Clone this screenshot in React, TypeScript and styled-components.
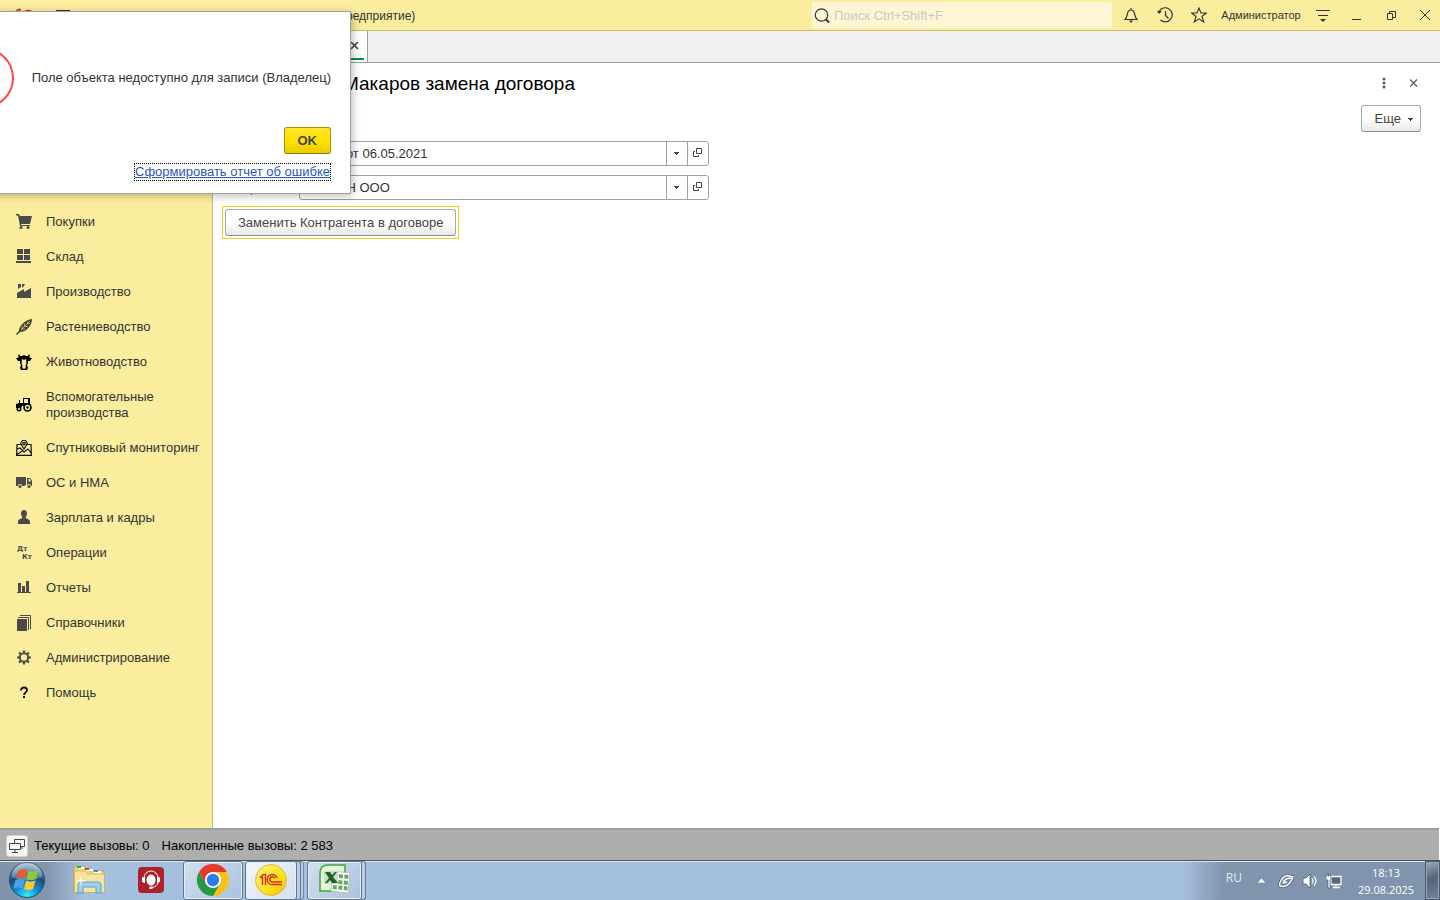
import React from "react";
import styled, { createGlobalStyle } from "styled-components";

const GlobalStyle = createGlobalStyle`
  * { box-sizing: border-box; }
  body {
    margin: 0;
    background: #fff;
    color: #333;
    font: 13px/16px "Liberation Sans", Arial, sans-serif;
  }
  button, input { font: inherit; color: inherit; }
  button { padding: 0; border: 0; background: none; cursor: pointer; }
  svg { display: block; flex: none; }
`;

const Page = styled.div`
  position: relative;
  display: flex;
  flex-direction: column;
  min-height: 100vh;
  overflow: hidden;
`;

/* ---------- title bar ---------- */
const TitleBar = styled.header`
  display: flex;
  align-items: center;
  gap: 14px;
  height: 31px;
  padding: 0 5px 0 14px;
  background: #fbed9e;
  border-bottom: 1px solid #c9bd72;
`;
const AppTitle = styled.span`
  flex: 1;
  margin-left: 5px;
  padding-top: 2px;
  font-size: 12px;
  white-space: nowrap;
`;
const IconButton = styled.button<{ $size?: number }>`
  display: flex;
  align-items: center;
  justify-content: center;
  width: ${(p) => p.$size ?? 20}px;
  height: ${(p) => p.$size ?? 20}px;
`;
const Search = styled.label`
  display: flex;
  align-items: center;
  gap: 3px;
  width: 300px;
  height: 26px;
  margin-right: -5px;
  padding-left: 2px;
  border-radius: 3px;
  background: #fdf6d4;
`;
const SearchInput = styled.input`
  flex: 1;
  min-width: 0;
  padding: 2px 0 0;
  border: 0;
  outline: 0;
  background: transparent;
  &::placeholder { color: #cbc9c0; opacity: 1; }
`;
const User = styled.button`
  min-width: 82px;
  margin: 0 -3px;
  font-size: 11px;
`;

/* ---------- tabs ---------- */
const TabBar = styled.nav`
  display: flex;
  height: 32px;
  padding-left: 213px;
  background: #f0f0f0;
  border-bottom: 1px solid #a0a0a0;
`;
const Tab = styled.div`
  display: flex;
  align-items: center;
  justify-content: flex-end;
  width: 155px;
  padding: 0 8px 0 3px;
  background: linear-gradient(#009646, #009646) 3px 27px / 148px 2px no-repeat #fff;
  border-right: 1px solid #a0a0a0;
`;

/* ---------- body ---------- */
const Body = styled.div`
  display: flex;
  flex: 1;
`;
const Sidebar = styled.nav`
  width: 213px;
  padding-top: 141px;
  background: #fbed9e;
  border-right: 1px solid #c9bd72;
`;
const Section = styled.a`
  display: flex;
  align-items: center;
  gap: 14px;
  padding: 10px 12px 9px 16px;
  color: #333;
  text-decoration: none;
`;
const Main = styled.main`
  flex: 1;
  padding: 0 19px 0 9px;
`;
const FormHeader = styled.div`
  display: flex;
  align-items: center;
  height: 42px;
`;
const Heading = styled.h1`
  flex: 1;
  margin: 0;
  padding-left: 121px;
  color: #000;
  font-size: 19px;
  line-height: 22px;
  font-weight: 400;
`;
const HeaderTools = styled.div`
  display: flex;
  gap: 14px;
  margin: 0 -1px 2px 0;
`;
const Toolbar = styled.div`
  display: flex;
  justify-content: flex-end;
  margin-bottom: 9px;
`;
const PushButton = styled.button<{ $accent?: boolean }>`
  display: flex;
  align-items: center;
  justify-content: center;
  gap: 7px;
  height: 27px;
  padding: 0 ${(p) => (p.$accent ? 13 : 12)}px;
  border: 1px solid ${(p) => (p.$accent ? "#a89600" : "#a9a9a9")};
  border-bottom-color: ${(p) => (p.$accent ? "#8c7d00" : "#8f8f8f")};
  border-radius: 3px;
  background: ${(p) =>
    p.$accent
      ? "linear-gradient(#ffe62e, #ffe100 50%, #eccb00)"
      : "linear-gradient(#fff, #fff 50%, #e8e8e8)"};
  color: #444;
  font-weight: ${(p) => (p.$accent ? 700 : 400)};
`;
const MoreButton = styled(PushButton)`
  padding: 0 6px 0 13px;
`;
const Field = styled.div`
  display: flex;
  align-items: center;
  margin-bottom: 9px;
`;
const FieldLabel = styled.label`
  width: 77px;
  color: #2b62b5;
`;
const FieldBox = styled.div`
  display: flex;
  width: 410px;
  height: 25px;
  border: 1px solid #a0a0a0;
  border-radius: 3px;
`;
const FieldInput = styled.input`
  flex: 1;
  min-width: 0;
  padding: 0 4px;
  border: 0;
  outline: 0;
  background: transparent;
`;
const FieldButton = styled.button`
  display: flex;
  align-items: center;
  justify-content: center;
  width: 21px;
  padding-bottom: 2px;
  border-left: 1px solid #a0a0a0;
`;
const FocusFrame = styled.div`
  display: inline-flex;
  margin-top: -3px;
  padding: 2px;
  border: 1px solid #f5cb14;
`;

/* ---------- error dialog ---------- */
const Dialog = styled.section`
  position: absolute;
  top: 11px;
  left: -66px;
  display: flex;
  flex-direction: column;
  width: 417px;
  padding: 36px 19px 12px;
  background: #fff;
  border: 1px solid #a0a0a0;
  box-shadow: 2px 2px 8px rgba(0, 0, 0, 0.25);
`;
const Message = styled.div`
  display: flex;
  align-items: center;
  justify-content: space-between;
  margin-bottom: 19px;
`;
const MessageText = styled.p`
  margin: 0;
  white-space: nowrap;
`;
const DialogActions = styled.div`
  display: flex;
  flex-direction: column;
  align-items: flex-end;
  gap: 9px;
`;
const ReportLink = styled.a`
  color: #1f57b8;
  border: 1px dotted #000;
`;

/* ---------- status bar ---------- */
const StatusBar = styled.footer`
  display: flex;
  align-items: center;
  gap: 12px;
  height: 32px;
  margin-right: 1px;
  padding: 2px 6px 0;
  background: #aeaeae;
  border-top: 2px solid #9e9e9e;
  color: #000;
`;
const StatusButton = styled(IconButton)`
  margin: 0 -6px 1px 0;
  border: 1px solid #d0d0d0;
  border-radius: 3px;
  background: #f7f7f7;
`;

/* ---------- taskbar ---------- */
const Taskbar = styled.footer`
  display: flex;
  align-items: center;
  height: 40px;
  border-top: 1px solid #49545f;
  box-shadow: inset 0 1px #dbe7f3;
  background: linear-gradient(90deg, #8193aa 0, #8496ae 48px, #a5c0de 84px, #a5c0de calc(100% - 258px), #8094ad calc(100% - 216px), #8094ad 100%);
`;
const Launchers = styled.div`
  display: flex;
  margin-right: 5px;
`;
const Launcher = styled.button<{ $width: number }>`
  display: flex;
  align-items: center;
  justify-content: center;
  width: ${(p) => p.$width}px;
  height: 39px;
  padding-bottom: 1px;
`;
const TaskButton = styled.button<{ $width: number; $stack?: number; $active?: boolean }>`
  display: flex;
  align-items: center;
  justify-content: center;
  width: ${(p) => p.$width}px;
  height: 39px;
  margin-right: ${(p) => 2 + (p.$stack ?? 0) * 4}px;
  padding-bottom: 2px;
  border: 1px solid #5f7791;
  border-radius: 3px;
  background: ${(p) =>
    p.$active ? "linear-gradient(135deg, #f2f6fa, #d3dfee)" : "linear-gradient(135deg, #d3dfed, #a9c2df)"};
  box-shadow: inset 0 0 0 1px #e6eef7
    ${(p) => (p.$stack ? ", 4px 0 0 -1px #b9cde4, 4px 0 0 0 #5f7791" : "")}
    ${(p) => (p.$stack && p.$stack > 1 ? ", 7px 0 0 -1px #b9cde4, 7px 0 0 0 #6f87a1" : "")};
`;
const Tray = styled.div`
  display: flex;
  align-items: center;
  height: 39px;
  margin-left: auto;
  color: #fff;
  font: 11px/17px "Open Sans", "Noto Sans", sans-serif;
`;
const Language = styled.span`
  margin: 0 11px 6px 0;
  color: #e3e8ee;
  font-size: 12px;
`;
const TrayIcons = styled.div`
  display: flex;
  align-items: center;
  gap: 8px;
  margin-right: 5px;
`;
const Clock = styled.time`
  width: 78px;
  text-align: center;
`;
const ShowDesktop = styled.button`
  width: 15px;
  height: 39px;
  border: 1px solid #4c5c70;
  background: linear-gradient(160deg, #9aa8ba, #54657a 45%, #71839a);
  box-shadow: inset 0 0 0 1px #93a3b7;
`;

const Glyph = ({ children, w = 16, h = 16 }: { children: React.ReactNode; w?: number; h?: number }) => (
  <svg width={w} height={h} viewBox={`0 0 ${w} ${h}`} fill="none" aria-hidden="true">
    {children}
  </svg>
);

const G = "#4a4a4a";

const sections: { name: string; icon: React.ReactNode }[] = [
  {
    name: "Покупки",
    icon: (
      <g fill={G}>
        <path d="M0 0h3l1 2h12l-2 8H5v1h9v1H4L2 1.500H0z" />
        <circle cx="5" cy="13.500" r="1.500" />
        <circle cx="12" cy="13.500" r="1.500" />
      </g>
    ),
  },
  { name: "Склад", icon: <path fill={G} d="M1 0h6v5H1zM8 0h6v5H8zM1 6h6v5H1zM8 6h6v5H8zM0 12h15v2H0z" /> },
  {
    name: "Производство",
    icon: <path fill={G} d="M1 14V9l7-4v3l7-4v10zM2 0h3v3L2 5zM6 0h3L8 2 6 4z" />,
  },
  {
    name: "Растениеводство",
    icon: (
      <>
        <path d="M.5 15.500L4 12" stroke="#2e2a1c" strokeWidth="1.300" />
        <path d="M3.500 12.500C3 8 7.500 2 15.500.5 15 8 9 13 3.500 12.500z" fill="#4d4834" stroke="#2e2a1c" strokeWidth=".8" />
        <path d="M5 11L14 2M6 7v3h3M8.500 4.500v3h3.500M11.500 2.500v2H14" stroke="#d9cc88" strokeWidth=".7" />
      </>
    ),
  },
  {
    name: "Животноводство",
    icon: (
      <>
        <path
          fill="#000"
          d="M3 0l1 2h2l2-1 2 1h2l1-2 1 2-1 1.500 3 .5-2 3h-2v2l-1 2 1 3-1 2H5l-1-2 1-3-1-2V7H2L0 4l3-.5L2 2z"
        />
        <path fill="#fbed9e" d="M6 5l2 1 2-1 .5 4-1 3 .5 2.500H6l.5-2.500-1-3z" />
      </>
    ),
  },
  {
    name: "Вспомогательные производства",
    icon: (
      <>
        <path fill="#000" d="M3 3h1v3h3V1h7v5l1 3H6l-1 2H0V7l3-1zM8 2v4h4V2z" fillRule="evenodd" />
        <circle cx="11.500" cy="10.500" r="3.500" fill="#fbed9e" stroke="#000" strokeWidth="1.600" />
        <circle cx="11.500" cy="10.500" r="1.200" fill="#000" />
        <circle cx="3" cy="12" r="1.800" fill="#fbed9e" stroke="#000" strokeWidth="1.400" />
      </>
    ),
  },
  {
    name: "Спутниковый мониторинг",
    icon: (
      <g stroke="#111" strokeWidth="1.200">
        <path d="M5 4.500H1L.6 15.400h14.800L15 4.500h-4M1 9l3-1 4 4 4-3 3 4M1 14.500l6-4" />
        <path d="M8 9L5.500 5a3 3 0 1 1 5 0z" fill="#fbed9e" />
        <circle cx="8" cy="3.500" r="1.200" />
      </g>
    ),
  },
  {
    name: "ОС и НМА",
    icon: (
      <>
        <path fill={G} d="M0 2h10v8l-2 1H6a2 2 0 0 0-4 0H0zM11 3h3l2 3v5h-1a2 2 0 0 0-4 0z" />
        <path fill="#fbed9e" d="M12.500 4h1.200L15 6.500h-2.500z" />
        <circle cx="4" cy="11.500" r="1.500" fill={G} />
        <circle cx="13" cy="11.500" r="1.500" fill={G} />
      </>
    ),
  },
  {
    name: "Зарплата и кадры",
    icon: <path fill={G} d="M8 0c2 0 3 1.300 3 3.200S9.800 7 9.600 7.500C10 9 14 8.500 14 12v2H2v-2c0-3.500 4-3 4.400-4.500C6.200 7 5 5.100 5 3.200S6 0 8 0z" />,
  },
  {
    name: "Операции",
    icon: (
      <g fill={G} fontFamily="DejaVu Sans, sans-serif" fontWeight="700" fontSize="7">
        <text x="1" y="6">Дт</text>
        <text x="6" y="14">Кт</text>
      </g>
    ),
  },
  { name: "Отчеты", icon: <path fill={G} d="M1 12h14v1H1zM2 3h3v9H2zM6 6h3v6H6zM10 1h3v11h-3z" /> },
  {
    name: "Справочники",
    icon: (
      <>
        <path fill={G} d="M1 4h10v12H1z" />
        <path stroke={G} d="M2 2.500h10.500V15M4 .5h10.500V14" />
      </>
    ),
  },
  {
    name: "Администрирование",
    icon: (
      <>
        <circle cx="8" cy="7.500" r="4.200" stroke={G} strokeWidth="2" />
        <path stroke={G} strokeWidth="2" d="M8 .5v3M8 11.500v3M1 7.500h3M12 7.500h3M3 2.500l2 2M11 10.500l2 2M13 2.500l-2 2M5 10.500l-2 2" />
      </>
    ),
  },
  {
    name: "Помощь",
    icon: (
      <>
        <path stroke="#111" strokeWidth="1.800" d="M5 5.500c0-2 1.200-3 3-3s3 1 3 2.700C11 7.500 8 7.500 8 10" />
        <path fill="#111" d="M7 11h2v2H7z" />
      </>
    ),
  },
];

const Caret = () => (
  <Glyph w={6} h={4}>
    <path fill="#444" d="M0 1h5v1H4v1H3v1H2V3H1V2H0z" />
  </Glyph>
);

const OpenIcon = () => (
  <Glyph w={10} h={10}>
    <path stroke="#444" d="M3.500 .5h5v5h-5zM2 3.500H.5v5h5V7" />
  </Glyph>
);

const PickField = ({ id, label, value }: { id: string; label: string; value: string }) => (
  <Field>
    <FieldLabel htmlFor={id}>{label}</FieldLabel>
    <FieldBox>
      <FieldInput id={id} defaultValue={value} />
      <FieldButton aria-label="Выбрать">
        <Caret />
      </FieldButton>
      <FieldButton aria-label="Открыть">
        <OpenIcon />
      </FieldButton>
    </FieldBox>
  </Field>
);

const OneC = ({ color, w, h }: { color: string; w: number; h: number }) => (
  <svg width={w} height={h} viewBox={`0 0 ${w} ${h}`} fill="none" stroke={color} aria-hidden="true">
    <path strokeWidth="1.500" d="M1 4.500L4 1.500h2V14M1 4h2.500v10" />
    <path strokeWidth="1.500" d="M19 5A5.500 5.500 0 1 0 14 13.500h9M17 6A3 3 0 1 0 14 11h9" />
  </svg>
);

const StartIcon = () => (
  <svg width="38" height="38" viewBox="0 0 38 38" aria-hidden="true">
    <defs>
      <radialGradient id="orb" cx="50%" cy="95%" r="90%">
        <stop offset="0" stopColor="#2ff0ff" />
        <stop offset=".35" stopColor="#1490d0" />
        <stop offset=".7" stopColor="#1d4a78" />
        <stop offset="1" stopColor="#8fb2cc" />
      </radialGradient>
    </defs>
    <circle cx="19" cy="19" r="17.500" fill="url(#orb)" stroke="#24496b" />
    <path d="M4 16a15 15 0 0 1 30 0c-9 4-21 4-30 0z" fill="#fff" opacity=".28" />
    <path fill="#f0592a" d="M11 9.500c3-2 5-2 8-.5l-2 8.500c-3-1.500-6-1.500-9 0z" />
    <path fill="#8fc63d" d="M20.500 9.500c3 1.500 6 1.500 10-.5l-2.500 9c-3 1.500-6 1.500-9.500 0z" />
    <path fill="#4aa3e8" d="M7.500 19c3-1.500 6-1.500 9 0l-2 8.500c-3-1.500-6-1.500-9 0z" />
    <path fill="#fdc82f" d="M18 19.500c3 1.500 6 1.500 9.500 0l-2.500 8.500c-3 1.500-6 1.500-9 0z" />
  </svg>
);

const FolderIcon = () => (
  <svg width="32" height="30" viewBox="0 0 32 30" aria-hidden="true">
    <path fill="#e9cf7a" stroke="#c3a548" d="M1 3l2-2h8l2 3h6l2 2h10v21H1z" />
    <path fill="#f7e3a0" d="M2 7h10l2 3h17v17H2z" />
    <path fill="#fff" d="M5 2h6v2H5zM13 4h7v2h-7zM21 6h7v2h-7z" />
    <path fill="#1fae3a" d="M4 1h4v2H4z" />
    <path fill="#d8402c" d="M12 3h4v2h-4z" />
    <path fill="#2e8ee0" d="M21 5h4v2h-4z" />
    <path fill="#9cd0ea" stroke="#5aa2c8" d="M5 28V19l2-2h19l2 2v9h-5v-6H10v6z" />
    <path stroke="#fff" d="M8 12v8M4 16h8" />
  </svg>
);

const HeadsetIcon = () => (
  <svg width="26" height="26" viewBox="0 0 26 26" aria-hidden="true">
    <rect width="26" height="26" rx="4" fill="#ad2228" />
    <ellipse cx="13" cy="13" rx="4.500" ry="5.500" fill="#fff" />
    <path d="M6 11a7 7 0 0 1 14 0M20 15c0 3-3 5-6 5.500" fill="none" stroke="#fff" />
    <path fill="#fff" d="M4 10.500l3-.5v6H6l-2-1.500zM22 10.500l-3-.5v6h1l2-1.500zM11.500 19.500h3v2.500h-3z" />
  </svg>
);

const ChromeIcon = () => (
  <svg width="32" height="32" viewBox="0 0 32 32" aria-hidden="true">
    <circle cx="16" cy="16" r="16" fill="#fbc117" />
    <path fill="#249a48" d="M2.140 8A16 16 0 0 0 16 32l6.930-12L16 24l-6.900-4z" />
    <path fill="#e33b2e" d="M16 8h13.860A16 16 0 0 0 2.140 8l6.930 12z" />
    <circle cx="16" cy="16" r="8" fill="#fff" />
    <circle cx="16" cy="16" r="6.200" fill="#2d7bea" />
  </svg>
);

const OneCIcon = () => (
  <svg width="32" height="32" viewBox="0 0 32 32" fill="none" aria-hidden="true">
    <defs>
      <linearGradient id="disc" x1="0" y1="0" x2="1" y2="1">
        <stop offset="0" stopColor="#fff27a" />
        <stop offset=".6" stopColor="#ffe11c" />
        <stop offset="1" stopColor="#f0bd00" />
      </linearGradient>
    </defs>
    <circle cx="16" cy="16" r="15.500" fill="url(#disc)" stroke="#d9bd45" />
    <g stroke="#dd2a1b" strokeWidth="1.400">
      <path d="M5 13.500l3.500-3h2V21M5 13.500h2.500V21" />
      <path d="M22 14A5 5 0 1 0 18 20.500h9M19.800 14.500A2.600 2.600 0 1 0 18 18h9" />
    </g>
  </svg>
);

const ExcelIcon = () => (
  <svg width="32" height="32" viewBox="0 0 32 32" aria-hidden="true">
    <path fill="#e5f3df" stroke="#3fa535" strokeWidth="1.500" d="M1 27V9c0-5 3-8 8-8h17v26z" />
    <path fill="#fff" stroke="#b8c6b2" d="M13 7l18 2-2 20-17-2z" />
    <path fill="#69a661" d="M20 10l4 .5-.3 4-4-.4zM25.500 10.600l4 .5-.3 4-4-.5zM19.500 16l4 .4-.3 4-4-.4zM25 16.500l4 .4-.3 4-4-.3zM14 21l4 .4-.3 4-4-.4zM19.500 21.500l4 .3-.3 4-4-.3zM25 22l3.500.4-.2 4-3.600-.5z" />
    <path fill="#c7e0bf" d="M5 7h14v13H5z" />
    <path fill="#21602a" d="M6 8h5l2 3 3-3h2l-4 5 5 6h-6l-2-3-3 3H6l4-5z" />
  </svg>
);

export default function App() {
  return (
    <Page>
      <GlobalStyle />
      <TitleBar>
        <OneC color="#d8232a" w={25} h={14} />
        <IconButton aria-label="Меню">
          <Glyph w={14} h={10}>
            <path stroke="#333" d="M0 .5h14M0 4.500h14M0 8.500h14" />
          </Glyph>
        </IconButton>
        <AppTitle>(КОПИЯ) ПРЕДКУПЦИНА, СПК (2023)., (1С:Предприятие)</AppTitle>
        <Search>
          <Glyph w={17} h={17}>
            <circle cx="7.500" cy="8" r="6.200" stroke="#333" strokeWidth="1.200" />
            <path stroke="#333" strokeWidth="2" d="M12 12.500l3 3" />
          </Glyph>
          <SearchInput type="search" aria-label="Поиск" placeholder="Поиск Ctrl+Shift+F" />
        </Search>
        <IconButton aria-label="Уведомления">
          <Glyph>
            <path stroke="#333" strokeWidth="1.200" d="M2 12.500c2-2 2-4 2.500-6C5 4 6 3 8 3s3 1 3.500 3.500c.5 2 .5 4 2.500 6zM8 1v2" />
            <path fill="#333" d="M6 13.500h4L8 16z" />
          </Glyph>
        </IconButton>
        <IconButton aria-label="История">
          <Glyph>
            <path stroke="#333" strokeWidth="1.200" d="M2 4.500A7 7 0 1 1 3.500 13M8.500 4v4.500l3 3" />
            <path fill="#333" d="M0 4h5L2 7z" />
          </Glyph>
        </IconButton>
        <IconButton aria-label="Избранное">
          <Glyph>
            <path stroke="#333" strokeWidth="1.100" d="M8 1l2 5h5.300L11 9.500l1.700 5.500L8 11.800 3.300 15 5 9.500.7 6H6z" />
          </Glyph>
        </IconButton>
        <User>Администратор</User>
        <IconButton aria-label="Настройки">
          <Glyph w={14} h={14}>
            <path stroke="#333" strokeWidth="1.200" d="M0 2.500h14M2 7.500h10" />
            <path fill="#333" d="M4 11h6l-3 3z" />
          </Glyph>
        </IconButton>
        <IconButton aria-label="Свернуть">
          <Glyph w={10} h={10}>
            <path stroke="#333" d="M0 9.500h9" />
          </Glyph>
        </IconButton>
        <IconButton aria-label="Восстановить">
          <Glyph w={10} h={10}>
            <path stroke="#333" d="M1.500 3.500h5v6h-5zM3.500 3V1.500h6v6H7" />
          </Glyph>
        </IconButton>
        <IconButton aria-label="Закрыть">
          <Glyph w={10} h={10}>
            <path stroke="#333" d="M0 0l10 10M10 0L0 10" />
          </Glyph>
        </IconButton>
      </TitleBar>

      <TabBar>
        <Tab>
          <IconButton $size={9} aria-label="Закрыть вкладку">
            <Glyph w={9} h={9}>
              <path stroke="#444" strokeWidth="1.600" d="M1 0l7 7M8 0L1 7" />
            </Glyph>
          </IconButton>
        </Tab>
      </TabBar>

      <Body>
        <Sidebar>
          {sections.map((s) => (
            <Section key={s.name} href="#">
              <Glyph>{s.icon}</Glyph>
              {s.name}
            </Section>
          ))}
        </Sidebar>
        <Main>
          <FormHeader>
            <Heading>Макаров замена договора</Heading>
            <HeaderTools>
              <IconButton $size={16} aria-label="Действия">
                <Glyph w={4} h={12}>
                  <g fill="#555">
                    <circle cx="2" cy="2" r="1.500" />
                    <circle cx="2" cy="6" r="1.500" />
                    <circle cx="2" cy="10" r="1.500" />
                  </g>
                </Glyph>
              </IconButton>
              <IconButton $size={16} aria-label="Закрыть форму">
                <Glyph w={8} h={8}>
                  <path stroke="#555" strokeWidth="1.200" d="M0 .5l7 7M7 .5l-7 7" />
                </Glyph>
              </IconButton>
            </HeaderTools>
          </FormHeader>
          <Toolbar>
            <MoreButton>
              Еще
              <Caret />
            </MoreButton>
          </Toolbar>
          <PickField id="contract" label="Договор:" value="№ 110 от 06.05.2021" />
          <PickField id="partner" label="Контрагент:" value="ТРУБИН ООО" />
          <FocusFrame>
            <PushButton>Заменить Контрагента в договоре</PushButton>
          </FocusFrame>
        </Main>
      </Body>

      <StatusBar>
        <StatusButton $size={22} aria-label="Показатели">
          <Glyph>
            <path stroke="#444" d="M5.500 5V1.500h10v7H12M.5 5.500h11v6H.5zM6 12v2M3 14.500h6M13 9v2" />
          </Glyph>
        </StatusButton>
        <span>Текущие вызовы: 0</span>
        <span>Накопленные вызовы: 2 583</span>
      </StatusBar>

      <Taskbar>
        <Launchers>
          <Launcher $width={54} aria-label="Пуск">
            <StartIcon />
          </Launcher>
          <Launcher $width={70} aria-label="Проводник">
            <FolderIcon />
          </Launcher>
          <Launcher $width={54} aria-label="Поддержка">
            <HeadsetIcon />
          </Launcher>
        </Launchers>
        <TaskButton $width={60} aria-label="Chrome">
          <ChromeIcon />
        </TaskButton>
        <TaskButton $width={52} $stack={2} $active aria-label="1С">
          <OneCIcon />
        </TaskButton>
        <TaskButton $width={55} $stack={1} aria-label="Excel">
          <ExcelIcon />
        </TaskButton>
        <Tray>
          <Language>RU</Language>
          <TrayIcons>
            <Glyph w={17} h={5}>
              <path fill="#fff" stroke="#4d5f76" strokeWidth=".5" d="M4 5l4.500-5L13 5z" />
            </Glyph>
            <Glyph>
              <path fill="#56687e" stroke="#3b4a5c" strokeWidth="2.600" d="M1.500 11C3 6 6 3 9 2.500l6 1C14 8 10 13 6 13.500l-4-.5z" />
              <path fill="#71839a" stroke="#fff" strokeWidth="1.400" d="M1.500 11C3 6 6 3 9 2.500l6 1C14 8 10 13 6 13.500l-4-.5zM5 10c1-4 4-5 9-5M5 10l4-1" />
            </Glyph>
            <Glyph>
              <path fill="#fff" stroke="#3b4a5c" strokeWidth=".7" d="M1 5h3l4-4v14l-4-4H1z" />
              <path stroke="#fff" strokeWidth="1.200" d="M10 5.500q2 2.500 0 5M12 3.500q4 4.500 0 9" />
            </Glyph>
            <Glyph>
              <path fill="#56687e" stroke="#fff" strokeWidth="1.300" d="M5 3.500h10v8H5zM7 14.500h7M10 12v2" />
              <path fill="#fff" stroke="#3b4a5c" strokeWidth=".6" d="M1 1h1v2h1V1h1v2h1v4H4v8H2V7H0V3h1z" />
            </Glyph>
          </TrayIcons>
          <Clock>
            18:13
            <br />
            29.08.2025
          </Clock>
          <ShowDesktop aria-label="Показать рабочий стол" />
        </Tray>
      </Taskbar>

      <Dialog role="dialog" aria-label="Ошибка">
        <Message>
          <Glyph w={60} h={60}>
            <circle cx="30" cy="30" r="29" stroke="#f9484e" strokeWidth="2" />
          </Glyph>
          <MessageText>Поле объекта недоступно для записи (Владелец)</MessageText>
        </Message>
        <DialogActions>
          <PushButton $accent>OK</PushButton>
          <ReportLink href="#">Сформировать отчет об ошибке</ReportLink>
        </DialogActions>
      </Dialog>
    </Page>
  );
}
